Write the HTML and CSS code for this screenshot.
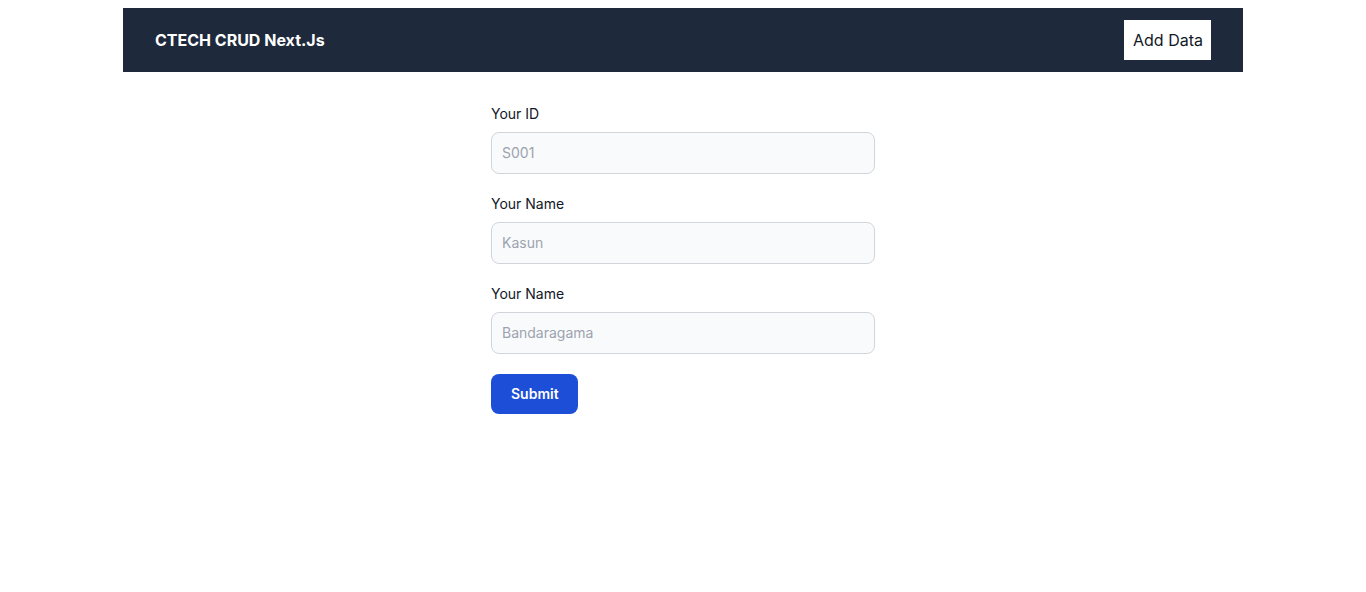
FILE: index.html
```html
<!DOCTYPE html>
<html lang="en">
<head>
<meta charset="utf-8">
<title>CTECH CRUD Next.Js</title>
<link rel="stylesheet" href="styles.css">
</head>
<body>
<nav class="navbar">
  <a class="brand" href="#">CTECH CRUD Next.Js</a>
  <a class="add-btn" href="#">Add Data</a>
</nav>
<form class="form">
  <div class="field">
    <label class="label" for="id">Your ID</label>
    <input class="input" id="id" type="text" placeholder="S001">
  </div>
  <div class="field">
    <label class="label" for="name">Your Name</label>
    <input class="input" id="name" type="text" placeholder="Kasun">
  </div>
  <div class="field">
    <label class="label" for="addr">Your Name</label>
    <input class="input" id="addr" type="text" placeholder="Bandaragama">
  </div>
  <button class="submit" type="button">Submit</button>
</form>
</body>
</html>
```

FILE: styles.css
```css
html, body {
  background: #ffffff;
}
body {
  margin: 8px;
  font-family: Inter, "Noto Sans", sans-serif;
  color: #111827;
}
.navbar {
  max-width: 1120px;
  margin: 0 auto;
  background: #1e293b;
  display: flex;
  align-items: center;
  justify-content: space-between;
  padding: 12px 32px;
  box-sizing: border-box;
}
.brand {
  color: #ffffff;
  font-weight: 700;
  font-size: 16px;
  line-height: 24px;
  text-decoration: none;
}
.add-btn {
  background: #ffffff;
  color: #111827;
  font-size: 16px;
  line-height: 24px;
  padding: 8px 8px 8px 9px;
  text-decoration: none;
}
.form {
  max-width: 384px;
  margin: 32px auto 0;
}
.field {
  margin-bottom: 20px;
}
.label {
  display: block;
  font-size: 14px;
  line-height: 20px;
  font-weight: 400;
  color: #111827;
  margin-bottom: 8px;
}
.input {
  display: block;
  width: 100%;
  box-sizing: border-box;
  background: #f9fafb;
  border: 1px solid #d1d5db;
  border-radius: 8px;
  padding: 10px;
  font-family: inherit;
  font-size: 14px;
  line-height: 20px;
  color: #111827;
  outline: none;
}
.input::placeholder {
  color: #9ca3af;
}
.submit {
  background: #1d4ed8;
  color: #ffffff;
  border: none;
  border-radius: 8px;
  padding: 10px 19px 10px 20px;
  font-family: inherit;
  font-size: 14px;
  line-height: 20px;
  font-weight: 600;
  cursor: pointer;
}
```
